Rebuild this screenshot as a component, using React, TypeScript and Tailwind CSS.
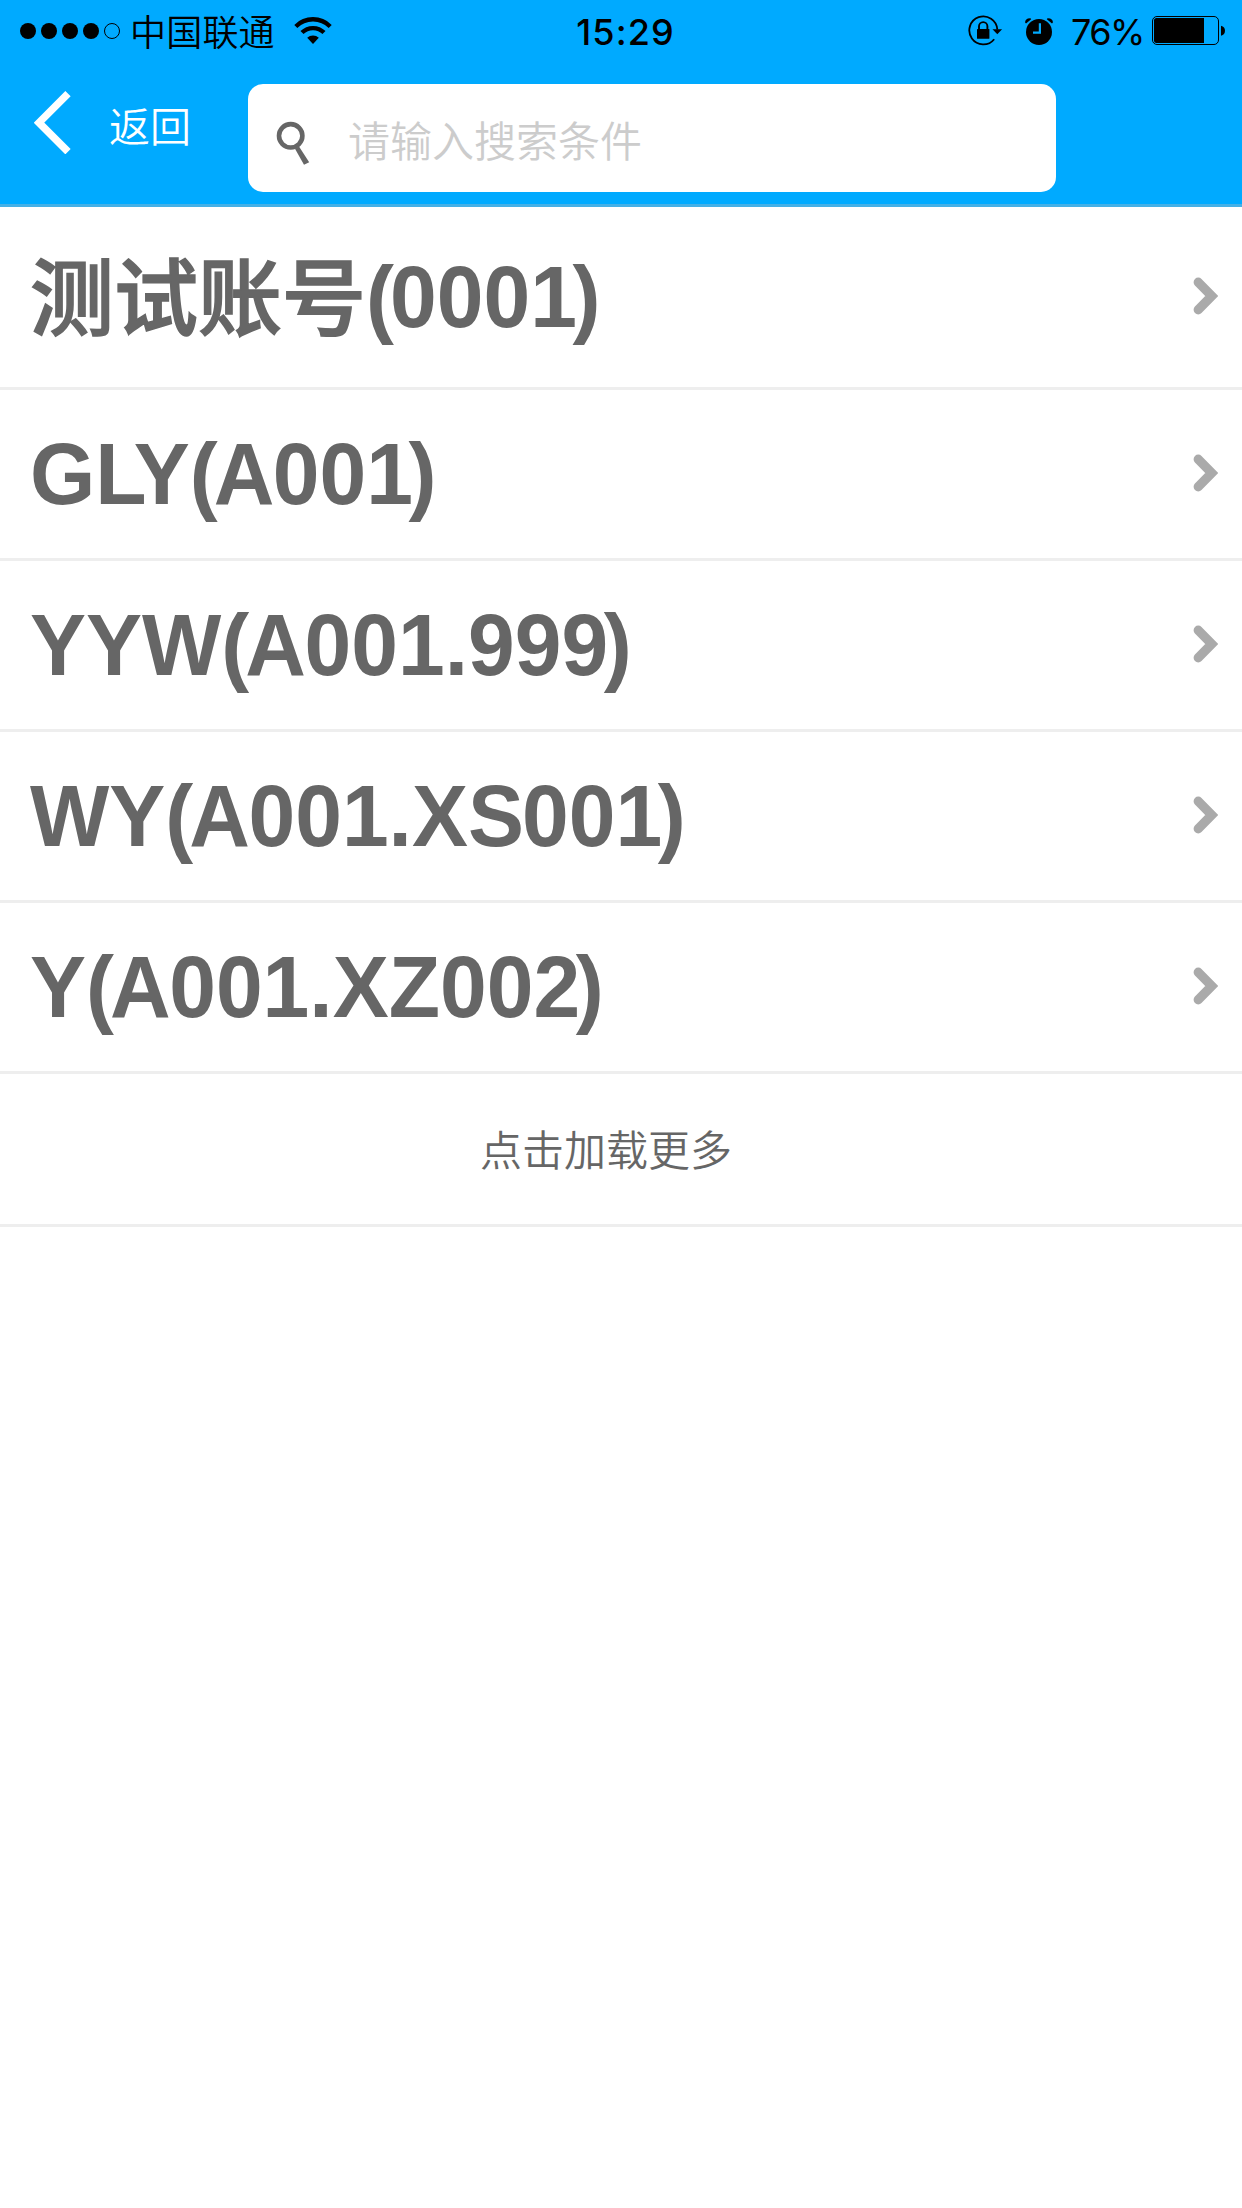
import { useState } from 'react'

interface Account {
  name: string
  code: string
}

const ACCOUNTS: Account[] = [
  { name: '测试账号', code: '0001' },
  { name: 'GLY', code: 'A001' },
  { name: 'YYW', code: 'A001.999' },
  { name: 'WY', code: 'A001.XS001' },
  { name: 'Y', code: 'A001.XZ002' },
]

function SignalDots() {
  return (
    <svg width="101" height="18" viewBox="0 0 101 18" className="shrink-0">
      {[9, 30, 51, 72].map((cx) => (
        <circle key={cx} cx={cx} cy="9" r="8" fill="#000" />
      ))}
      <circle cx="93" cy="9" r="7.5" fill="none" stroke="#000" strokeWidth="1" />
    </svg>
  )
}

function WifiIcon() {
  return (
    <svg width="38" height="28" viewBox="0 0 38 28" className="shrink-0">
      <path d="M1.8 9.4a24.3 24.3 0 0 1 34.4 0" fill="none" stroke="#000" strokeWidth="4.3" />
      <path d="M8 15.6a15.6 15.6 0 0 1 22 0" fill="none" stroke="#000" strokeWidth="4.3" />
      <path d="M19 27l-5.8-6.2a8.5 8.5 0 0 1 11.6 0z" fill="#000" />
    </svg>
  )
}

function RotationLockIcon() {
  return (
    <svg width="36" height="32" viewBox="0 0 36 32" className="shrink-0">
      <path d="M27.2 24.2A14 14 0 1 1 30.3 14.5" fill="none" stroke="#000" strokeWidth="1.8" />
      <path d="M25.5 14.2h9.6l-4.8 5z" fill="#000" />
      <rect x="10" y="14" width="12.4" height="9.8" rx="0.6" fill="#000" />
      <path d="M12 14.5v-3.2a4.2 4.2 0 0 1 8.4 0v3.2" fill="none" stroke="#000" strokeWidth="1.9" />
    </svg>
  )
}

function AlarmIcon() {
  return (
    <svg width="30" height="30" viewBox="0 0 30 30" className="shrink-0">
      <circle cx="15" cy="16" r="13" fill="#000" />
      <path d="M1.1 6.6C1 3.8 3 2 6.5 2.2L7.2 3.2 2 7.4z" fill="#000" />
      <path d="M28.9 6.6C29 3.8 27 2 23.5 2.2L22.8 3.2 28 7.4z" fill="#000" />
      <path d="M15.9 7.3v9.4H9" fill="none" stroke="#0af" strokeWidth="2.2" />
    </svg>
  )
}

function BatteryIcon() {
  return (
    <svg width="75" height="30" viewBox="0 0 75 30" className="shrink-0">
      <rect x="0.5" y="0.5" width="66" height="28" rx="4.5" fill="none" stroke="#000" strokeWidth="1" />
      <path d="M4.5 2H52v25H4.5A2.5 2.5 0 0 1 2 24.5v-20A2.5 2.5 0 0 1 4.5 2z" fill="#000" />
      <path d="M69 9.7q4 1 4 5t-4 5z" fill="#000" />
    </svg>
  )
}

function StatusBar() {
  return (
    <div className="grid h-[60px] grid-cols-[1fr_auto_1fr] items-center font-['Inter','Noto_Sans_CJK_SC',sans-serif] text-[36px] leading-[60px] text-black">
      <div className="flex items-center pl-[19px]">
        <SignalDots />
        <span className="-mt-[2px] ml-[10px] font-['Noto_Sans_CJK_SC',sans-serif] text-[36px] font-[350] tracking-[0.2px]">
          中国联通
        </span>
        <span className="ml-[19px]">
          <WifiIcon />
        </span>
      </div>
      <span className="mt-[2px] pl-[9px] font-medium tracking-[1.1px]">15:29</span>
      <div className="flex items-center justify-end pr-[15px]">
        <RotationLockIcon />
        <span className="ml-[21px]">
          <AlarmIcon />
        </span>
        <span className="ml-[17px] mt-[2px] w-[81px] tracking-[-1.6px]">76%</span>
        <BatteryIcon />
      </div>
    </div>
  )
}

function SearchIcon() {
  return (
    <svg width="34" height="46" viewBox="0 0 34 46" className="shrink-0">
      <circle cx="14.7" cy="15.8" r="11.7" fill="none" stroke="#666" strokeWidth="4.6" />
      <path d="M19 28.8l4-2.3L33.2 42.2l-5.2 2.6z" fill="#666" />
    </svg>
  )
}

function Header() {
  const [keyword, setKeyword] = useState('')

  return (
    <header className="flex h-[207px] flex-col border-b-[3px] border-[#45b0e6] bg-[#00aaff]">
      <StatusBar />
      <div className="flex items-start">
        <button className="flex w-[248px] items-start pl-[34px] pt-[30px] text-white">
          <svg width="38" height="64" viewBox="0 0 38 64">
            <path d="M34 3.7L5 32.7l29 29" fill="none" stroke="#fff" strokeWidth="7.5" />
          </svg>
          <span className="ml-[37px] mt-[4px] font-['Noto_Sans_CJK_SC',sans-serif] text-[41px] font-[350] leading-[60px]">返回</span>
        </button>
        <label className="mt-[24px] flex h-[108px] w-[808px] items-center rounded-[15px] bg-white pl-[28px]">
          <span className="mt-[10px]">
            <SearchIcon />
          </span>
          <input
            value={keyword}
            onChange={(e) => setKeyword(e.target.value)}
            placeholder="请输入搜索条件"
            className="ml-[38px] h-[64px] w-[640px] font-['Noto_Sans_CJK_SC',sans-serif] text-[42px] font-[350] text-[#666] outline-none placeholder:text-[#ccc]"
          />
        </label>
      </div>
    </header>
  )
}

// Isolates the characters that need their own spacing to the next one
const KERN_BREAKS = /(?=[(LAS)])|(?<=[(LAS])|(?=.\))/

function kernClass(piece: string, next?: string) {
  if (next === ')') return 'tracking-[-4.5px]'
  if (piece === 'L') return 'tracking-[-13px]'
  if (piece === '(') return 'tracking-[-4px]'
  if (piece === 'A') return 'tracking-[-1.5px]'
  if (piece === 'S') return 'tracking-[-2px]'
  return undefined
}

function AccountLabel({ name, code }: Account) {
  const isLatin = /^[A-Z]/.test(name)
  const text = isLatin ? `${name}(${code})` : `(${code})`

  return (
    <span className="flex items-baseline font-['Liberation_Sans','Noto_Sans_CJK_SC',sans-serif] text-[84px] font-bold leading-[100px] text-[#666]">
      {!isLatin && (
        <span className="translate-y-[3px] font-medium [-webkit-text-stroke:1.6px_#666]">{name}</span>
      )}
      <span className="scale-y-[1.045]">
        {text.split(KERN_BREAKS).map((piece, i, pieces) => (
          <span key={i} className={kernClass(piece, pieces[i + 1])}>
            {piece}
          </span>
        ))}
      </span>
    </span>
  )
}

function AccountRow(account: Account) {
  return (
    <li className="flex h-[171px] items-center justify-between border-b-[3px] border-[#eee] pl-[30px] pr-[24px] first:h-[183px]">
      <AccountLabel {...account} />
      <svg width="25" height="38" viewBox="0 0 25 38" className="mb-[3px]">
        <path d="M5.2 5.2L18.7 19 5.2 32.8" fill="none" stroke="#aaa" strokeWidth="9.2" strokeLinecap="round" />
      </svg>
    </li>
  )
}

export default function App() {
  return (
    <div className="min-h-[2208px] w-[1242px] bg-white">
      <Header />
      <ul>
        {ACCOUNTS.map((account) => (
          <AccountRow key={account.code} {...account} />
        ))}
      </ul>
      <button className="flex h-[153px] w-full items-center justify-center border-b-[3px] border-[#eee] pb-[4px] pr-[30px] font-['Noto_Sans_CJK_SC',sans-serif] text-[42px] font-[350] text-[#666]">
        点击加载更多
      </button>
    </div>
  )
}
